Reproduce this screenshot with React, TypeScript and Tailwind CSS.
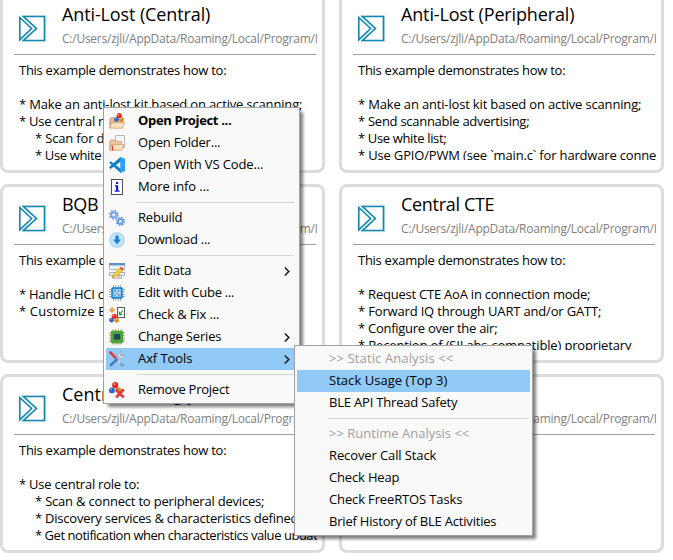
import { useLayoutEffect, useRef, useState, type ReactNode } from "react";

type Line = { text: string; w: number; indent?: boolean };

/** One line of text whose letter spacing is set so that it fills the given width. */
function Fit({ text, w, className = "" }: { text: string; w: number; className?: string }) {
  const ref = useRef<HTMLSpanElement>(null);
  const [spacing, setSpacing] = useState(0);
  useLayoutEffect(() => {
    if (ref.current) {
      const natural = ref.current.getBoundingClientRect().width - spacing * text.length;
      setSpacing((w + 0.3 - natural) / text.length);
    }
  }, [text, w]);
  return (
    <span ref={ref} className={"inline-block whitespace-pre " + className} style={{ letterSpacing: spacing }}>
      {text}
    </span>
  );
}

function ProjectLogo() {
  return (
    <svg className="h-[29px] w-[29px] shrink-0" viewBox="0 0 29 29" fill="none">
      <path d="M4.2 1.4H27.8V27.8H4.2" stroke="#d9dfe2" strokeWidth="0.8" />
      <path d="M5.5 2.5H26.5V26.5H5.5L18.4 14.5Z" stroke="#1089b1" strokeWidth="1.7" />
      <path d="M1.8 3.5L13.6 14.5L1.8 25.8Z" fill="white" stroke="#1089b1" strokeWidth="1.6" />
    </svg>
  );
}

function Card({ title, titleW, lines }: { title: string; titleW: number; lines: Line[] }) {
  return (
    <section className="h-[179px] w-[325px] overflow-hidden rounded-[8px] border-[3px] border-[#dcdcdc] bg-white pl-[11px]">
      <header className="flex h-[57px] w-[303px] overflow-hidden pl-1">
        <div className="pt-[17px]">
          <ProjectLogo />
        </div>
        <div className="ml-[15px] min-w-0 flex-1 overflow-hidden whitespace-nowrap">
          <h2 className="h-8 pt-1 text-[18px] leading-[26px] text-black">
            {title ? <Fit text={title} w={titleW} /> : null}
          </h2>
          <p className="text-[12px] leading-[19px] text-[#808080]">
            <Fit text="C:/Users/zjli/AppData/Roaming/Local/Program/I" w={255.5} />
          </p>
        </div>
      </header>
      <div className="h-px w-[302px] bg-[#a0a0a0]" />
      <div className="h-[105px] w-[303px] overflow-hidden pt-[7px] pl-[5px] text-[13px] leading-[17px] text-black">
        {lines.map((l, i) => (
          <div key={i} className={l.indent ? "h-[17px] pl-4" : "h-[17px]"}>
            {l.text ? <Fit text={l.text} w={l.w} /> : null}
          </div>
        ))}
      </div>
    </section>
  );
}

const intro: Line[] = [
  { text: "This example demonstrates how to:", w: 207 },
  { text: "", w: 0 },
];

const cards: { title: string; titleW: number; lines: Line[] }[] = [
  {
    title: "Anti-Lost (Central)",
    titleW: 148,
    lines: [
      ...intro,
      { text: "* Make an anti-lost kit based on active scanning;", w: 283 },
      { text: "* Use central role to:", w: 120 },
      { text: "* Scan for devices;", w: 108, indent: true },
      { text: "* Use white list;", w: 88, indent: true },
    ],
  },
  {
    title: "Anti-Lost (Peripheral)",
    titleW: 173,
    lines: [
      ...intro,
      { text: "* Make an anti-lost kit based on active scanning;", w: 283 },
      { text: "* Send scannable advertising;", w: 171 },
      { text: "* Use white list;", w: 88 },
      { text: "* Use GPIO/PWM (see `main.c` for hardware connec", w: 304 },
    ],
  },
  {
    title: "BQB",
    titleW: 36,
    lines: [...intro, { text: "* Handle HCI commands;", w: 147 }, { text: "* Customize BQB;", w: 110 }],
  },
  {
    title: "Central CTE",
    titleW: 93,
    lines: [
      ...intro,
      { text: "* Request CTE AoA in connection mode;", w: 232 },
      { text: "* Forward IQ through UART and/or GATT;", w: 243 },
      { text: "* Configure over the air;", w: 139 },
      { text: "* Reception of (SILabs-compatible) proprietary", w: 273 },
    ],
  },
  {
    title: "Central Debug y",
    titleW: 134,
    lines: [
      ...intro,
      { text: "* Use central role to:", w: 120 },
      { text: "* Scan & connect to peripheral devices;", w: 229, indent: true },
      { text: "* Discovery services & characteristics defined", w: 263, indent: true },
      { text: "* Get notification when characteristics value updat", w: 282, indent: true },
    ],
  },
  { title: "", titleW: 0, lines: [] },
];

function Icon({ children }: { children: ReactNode }) {
  return (
    <svg className="h-4 w-4 shrink-0" viewBox="0 0 16 16" fill="none">
      {children}
    </svg>
  );
}

function Balls({ x, y }: { x: number; y: number }) {
  return (
    <g transform={`translate(${x} ${y})`}>
      <circle cx="2.4" cy="6.4" r="2.4" fill="#2c62c4" />
      <circle cx="7.6" cy="6.6" r="2.4" fill="#cf8d25" />
      <circle cx="5.2" cy="2.6" r="2.6" fill="#e02a24" />
      <circle cx="4.4" cy="1.8" r="0.9" fill="#ff8a7c" />
      <circle cx="1.8" cy="5.6" r="0.8" fill="#7fa7ee" />
      <circle cx="7" cy="5.8" r="0.8" fill="#f3c877" />
    </g>
  );
}

const icons = {
  project: (
    <Icon>
      <path d="M0.8 14.5V6L2 4.8H5L6 6.2H13.5V14.5Z" fill="#e8b98a" stroke="#cc9461" strokeWidth="0.8" />
      <Balls x={5} y={0} />
      <path d="M0.8 15.2L2.8 9.4H15.5L13.4 15.2Z" fill="#fae0c2" stroke="#d59f70" strokeWidth="0.8" />
    </Icon>
  ),
  folder: (
    <Icon>
      <path d="M6.5 0.5H15.5V12.5H6.5Z" fill="#f7f9fa" stroke="#a3aaaf" strokeWidth="0.8" />
      <path d="M0.8 14.5V6L2 4.8H5L6 6.2H12.5V14.5Z" fill="#efc7a0" stroke="#cf9a6c" strokeWidth="0.8" />
      <path d="M0.8 15.2L2.6 9.4H15L13 15.2Z" fill="#fae0c2" stroke="#d59f70" strokeWidth="0.8" />
      <path d="M2.5 11H4.5M3.5 11V15.2M2.5 15H4.5" stroke="#e2403a" strokeWidth="1" />
    </Icon>
  ),
  code: (
    <Icon>
      <path d="M11.4 0.2L15.8 2.1V13.9L11.4 15.8L0.2 5.8L1.7 4.3L11.7 11.8V4.2L1.7 11.7L0.2 10.2Z" fill="#1282c8" />
      <path d="M0.2 10.2L11.4 0.2V4.4L1.7 11.7Z" fill="#1282c8" />
      <path d="M11.4 0.2L15.8 2.1V13.9L11.4 15.8Z" fill="#28a3ec" />
    </Icon>
  ),
  info: (
    <Icon>
      <rect x="2.5" y="0.5" width="11" height="15" fill="white" stroke="#505058" />
      <path d="M7 3H9.2V5H7ZM5.8 6.3H9.2V11.5H10.6V12.8H5.6V11.5H7V7.5H5.8Z" fill="#1010f0" />
    </Icon>
  ),
  gears: (
    <Icon>
      <circle cx="4.8" cy="4.8" r="4" stroke="#5f92dc" strokeWidth="1.6" strokeDasharray="1.6 1.54" />
      <circle cx="4.8" cy="4.8" r="2.6" fill="#e7f0fc" stroke="#7aa6e6" strokeWidth="2" />
      <circle cx="11.4" cy="11.4" r="3.8" stroke="#4e84d4" strokeWidth="1.6" strokeDasharray="1.5 1.48" />
      <circle cx="11.4" cy="11.4" r="2.4" fill="#e7f0fc" stroke="#6f9de2" strokeWidth="2" />
    </Icon>
  ),
  download: (
    <Icon>
      <circle cx="8" cy="8" r="7.8" fill="#a9d3f6" />
      <circle cx="8" cy="8" r="6.4" fill="#cbe5fb" />
      <path d="M6.4 3.6H9.6V7.6H12L8 12.4L4 7.6H6.4Z" fill="#1b83e2" />
    </Icon>
  ),
  edit: (
    <Icon>
      <path d="M0.5 0.5H15.5V6.5H0.5Z" fill="#eef1f4" stroke="#b8bcc4" />
      <path d="M0 0H16V2.4H0Z" fill="#668fc5" />
      <path d="M0.5 9.5H15.5V12.3H0.5ZM3.5 12.5H12.5V15.3H3.5ZM6 9.5V12.3M10 9.5V15" fill="#f2f2f2" stroke="#a6a6aa" strokeWidth="0.9" />
      <path d="M3.6 14.6L4.8 11L11 4.8L13.6 7.2L7.3 13.4Z" fill="#f3d234" stroke="#b48d1c" strokeWidth="0.5" />
      <path d="M10.8 5.2L12.2 3.8L14.7 6.2L13.4 7.6Z" fill="#e8382d" />
    </Icon>
  ),
  cube: (
    <Icon>
      <path d="M4.5 0V16M6.5 0V16M9.5 0V16M11.5 0V16M0 4.5H16M0 6.5H16M0 9.5H16M0 11.5H16" stroke="#8ea4b8" strokeWidth="0.9" />
      <rect x="2.3" y="2.3" width="11.4" height="11.4" rx="1" fill="#1f83d2" />
      <rect x="4.2" y="4.2" width="7.6" height="7.6" fill="#b9dcf5" stroke="#72b5e8" strokeWidth="0.6" />
      <path d="M5.5 5.5H7V7H5.5ZM9 5.5H10V7H9ZM7 8H8.5V9H7ZM5.5 9.5H6.5V11H5.5ZM9 9.5H10.5V10.7H9Z" fill="#35709d" />
    </Icon>
  ),
  check: (
    <Icon>
      <path d="M3 0L6 3L3 6L0 3Z" fill="#ee9438" />
      <circle cx="3" cy="3" r="1.1" fill="#f9ca90" />
      <rect x="8.5" y="0.5" width="7" height="10" fill="white" stroke="#54605a" />
      <path d="M10.4 4.6V7.6H13.4M10.7 7.3L13.8 3.6" stroke="#2f9c35" strokeWidth="1.2" />
      <Balls x={0.1} y={6.7} />
    </Icon>
  ),
  chip: (
    <Icon>
      <path d="M4 0.5V15.5M6.7 0.5V15.5M9.3 0.5V15.5M12 0.5V15.5M0.5 4H15.5M0.5 6.7H15.5M0.5 9.3H15.5M0.5 12H15.5" stroke="#bd9a4b" strokeWidth="1.3" />
      <rect x="1.8" y="1.8" width="12.4" height="12.4" rx="1.4" fill="#4aa544" />
      <rect x="4.8" y="5" width="6.4" height="5.6" fill="#26484e" />
    </Icon>
  ),
  tools: (
    <Icon>
      <path d="M1.4 1.4L6.6 7" stroke="#d63b42" strokeWidth="2.6" strokeLinecap="round" />
      <path d="M7 7.6L12.2 13" stroke="#d8dce4" strokeWidth="1.3" />
      <path d="M11.4 12.2L14.4 15.2" stroke="#8594ad" strokeWidth="2" />
      <path d="M2 14L8.4 8" stroke="#4d79c5" strokeWidth="2.8" strokeLinecap="round" />
      <path d="M8.4 8L10.8 5.7" stroke="#b7c0cc" strokeWidth="2.5" />
      <path d="M12.9 0.9C9.5 0.2 8 3.8 9.8 6.2C11.8 8.2 15.7 6.8 15.3 3.3L13 5.1L11.2 4.7L10.9 2.8Z" fill="#f1f3f5" stroke="#8b97a7" strokeWidth="0.8" />
    </Icon>
  ),
  remove: (
    <Icon>
      <circle cx="9.4" cy="8" r="2.8" fill="#cf8d25" />
      <circle cx="2.9" cy="8.4" r="2.9" fill="#2c62c4" />
      <circle cx="2.2" cy="7.5" r="0.9" fill="#7fa7ee" />
      <circle cx="6.2" cy="3.2" r="3.1" fill="#e32b25" />
      <circle cx="5.3" cy="2.2" r="1" fill="#ff8c80" />
      <path d="M6.8 7.8L14.8 15.4M14.8 7.4L7.2 15.4" stroke="#e13a35" strokeWidth="2.8" />
    </Icon>
  ),
};

type Entry = {
  label?: string;
  w?: number;
  icon?: keyof typeof icons;
  bold?: boolean;
  arrow?: boolean;
  active?: boolean;
  muted?: boolean;
};

const mainMenu: Entry[] = [
  { label: "Open Project ...", w: 93, icon: "project", bold: true },
  { label: "Open Folder...", w: 82, icon: "folder" },
  { label: "Open With VS Code...", w: 125, icon: "code" },
  { label: "More info ...", w: 71, icon: "info" },
  {},
  { label: "Rebuild", w: 44, icon: "gears" },
  { label: "Download ...", w: 72, icon: "download" },
  {},
  { label: "Edit Data", w: 53, icon: "edit", arrow: true },
  { label: "Edit with Cube ...", w: 96, icon: "cube" },
  { label: "Check & Fix ...", w: 81, icon: "check" },
  { label: "Change Series", w: 83, icon: "chip", arrow: true },
  { label: "Axf Tools", w: 54, icon: "tools", arrow: true, active: true },
  {},
  { label: "Remove Project", w: 91, icon: "remove" },
];

const subMenu: Entry[] = [
  { label: ">> Static Analysis <<", w: 124, muted: true },
  { label: "Stack Usage (Top 3)", w: 118, active: true },
  { label: "BLE API Thread Safety", w: 128 },
  {},
  { label: ">> Runtime Analysis <<", w: 140, muted: true },
  { label: "Recover Call Stack", w: 107 },
  { label: "Check Heap", w: 70 },
  { label: "Check FreeRTOS Tasks", w: 133 },
  { label: "Brief History of BLE Activities", w: 167 },
];

function Menu({ entries, className }: { entries: Entry[]; className: string }) {
  return (
    <nav
      className={
        "absolute border border-[#a0a0a0] bg-[#f9f9f9] p-0.5 text-[13px] text-black shadow-[4px_4px_3px_-1px_rgba(0,0,0,0.5)] " +
        className
      }
    >
      {entries.map((e, i) =>
        e.label ? (
          <div key={i} className={"flex h-[22px] items-center pr-[7px] pl-[3px] " + (e.active ? "bg-[#91c9f7]" : "")}>
            <span className="mr-[13px] flex w-4">{e.icon ? icons[e.icon] : null}</span>
            <Fit
              text={e.label}
              w={e.w ?? 0}
              className={
                "pb-0.5 leading-[20px] " + (e.bold ? "font-bold " : "") + (e.muted ? "text-[#a0a0a0]" : "")
              }
            />
            {e.arrow ? (
              <svg className="ml-auto h-[9px] w-[6px]" viewBox="0 0 6 9" fill="none">
                <path d="M0.8 0.6L4.8 4.5L0.8 8.4" stroke="#111" strokeWidth="1.4" />
              </svg>
            ) : null}
          </div>
        ) : (
          <div key={i} className="h-[9px] pt-1 pr-[3px] pl-[31px]">
            <div className="h-px bg-[#d3d3d3]" />
          </div>
        ),
      )}
    </nav>
  );
}

export default function App() {
  return (
    <main className="relative h-[560px] w-[673px] overflow-hidden bg-white font-['Open_Sans','Noto_Sans',sans-serif]">
      <div className="-mt-[6px] grid w-[664px] grid-cols-[325px_325px] gap-x-[14px] gap-y-[11px]">
        {cards.map((c, i) => (
          <Card key={i} {...c} />
        ))}
      </div>
      <Menu entries={mainMenu} className="top-[107px] left-[103px] w-[197px]" />
      <Menu entries={subMenu} className="top-[345px] left-[294px] w-[239px]" />
    </main>
  );
}
